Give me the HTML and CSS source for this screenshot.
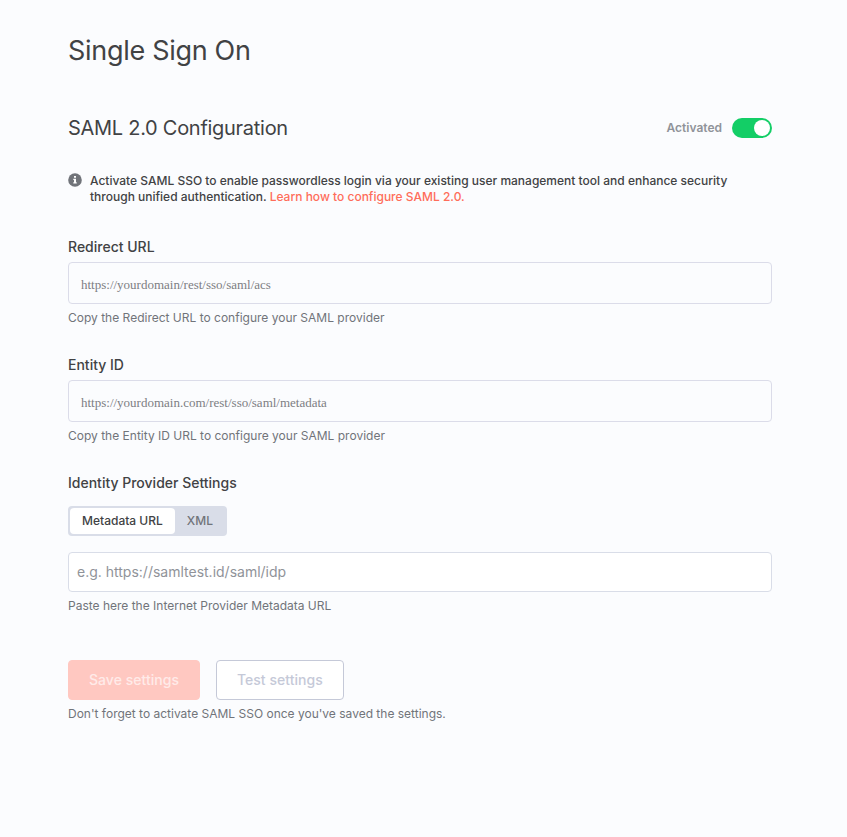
FILE: index.html
```html
<!DOCTYPE html>
<html lang="en">
<head>
  <meta charset="UTF-8">
  <title>Single Sign On</title>
  <link rel="stylesheet" href="styles.css">
</head>
<body>

<main class="container">
  <h1>Single Sign On</h1>

  <div class="top">
    <h2>SAML 2.0 Configuration</h2>
    <label class="switch">
      <span class="switch-label">Activated</span>
      <input type="checkbox" checked>
      <span class="switch-core"></span>
    </label>
  </div>

  <div class="info">
    <svg class="info-icon" viewBox="0 0 14 14" width="14" height="14">
      <circle cx="7" cy="7" r="6.8" fill="#71747a"/>
      <path d="M6 3h2v1.8H6zM5.3 5.8H8v3.5h.7v1.3H5.3V9.3H6V7.1h-.7z" fill="#fff"/>
    </svg>
    <p>Activate SAML SSO to enable passwordless login via your existing user management tool and enhance security through unified authentication. <a href="#">Learn how to configure SAML 2.0.</a></p>
  </div>

  <div class="group">
    <label>Redirect URL</label>
    <div class="copy-input">https://yourdomain/rest/sso/saml/acs</div>
    <small>Copy the Redirect URL to configure your SAML provider</small>
  </div>

  <div class="group">
    <label>Entity ID</label>
    <div class="copy-input">https://yourdomain.com/rest/sso/saml/metadata</div>
    <small>Copy the Entity ID URL to configure your SAML provider</small>
  </div>

  <div class="group idp">
    <label for="metadataUrl">Identity Provider Settings</label>
    <div class="tabs">
      <button type="button" class="tab active">Metadata URL</button>
      <button type="button" class="tab">XML</button>
    </div>
    <input type="text" id="metadataUrl" class="text-input" placeholder="e.g. https://samltest.id/saml/idp">
    <small>Paste here the Internet Provider Metadata URL</small>
  </div>

  <div class="buttons">
    <button type="button" class="btn primary" disabled>Save settings</button>
    <button type="button" class="btn secondary" disabled>Test settings</button>
  </div>
  <small>Don't forget to activate SAML SSO once you've saved the settings.</small>
</main>

</body>
</html>
```
FILE: styles.css
```css
* {
  box-sizing: border-box;
}
body {
  margin: 0;
  background: #fbfcfe;
  color: #414244;
  font-family: Inter, sans-serif;
  font-size: 14px;
}
button, input {
  font-family: inherit;
}
.container {
  width: 704px;
  margin: 0 auto 0 68px;
  padding-top: 33px;
}
h1, h2, p {
  margin: 0;
  font-weight: 400;
}
h1 {
  font-size: 27px;
  line-height: 36px;
  letter-spacing: -0.3px;
}
.top {
  display: flex;
  justify-content: space-between;
  align-items: center;
  margin-top: 46px;
}
h2 {
  font-size: 20px;
  line-height: 26px;
  letter-spacing: -0.28px;
}
.switch {
  display: flex;
  align-items: center;
  gap: 10px;
}
.switch input {
  display: none;
}
.switch-label {
  padding-bottom: 2px;
  color: #909399;
  font-size: 12px;
  font-weight: 600;
}
.switch-core {
  display: flex;
  justify-content: flex-end;
  width: 40px;
  height: 20px;
  padding: 2px;
  border-radius: 10px;
  background: #13ce66;
}
.switch-core::after {
  content: "";
  width: 16px;
  height: 16px;
  border-radius: 50%;
  background: #fff;
}
.info {
  display: flex;
  align-items: flex-start;
  gap: 8px;
  margin-top: 32px;
  font-size: 12px;
  line-height: 16px;
}
.info p {
  width: 660px;
  font-weight: 500;
}
.info-icon {
  flex: none;
}
.info a {
  color: #ff6d5a;
  text-decoration: none;
}
.group {
  margin-top: 29px;
}
.info + .group {
  margin-top: 32px;
}
.group label {
  display: block;
  margin-bottom: 6px;
  font-weight: 500;
  line-height: 19px;
}
small {
  display: block;
  margin-top: 6px;
  color: #71747a;
  font-size: 12px;
  line-height: 16px;
}
.copy-input {
  height: 42px;
  padding: 3px 12px 0;
  border: 1px solid #dbdce9;
  border-radius: 4px;
  color: #7d7e83;
  font-family: "Liberation Serif", serif;
  font-size: 13px;
  line-height: 38px;
}
.idp label {
  margin-bottom: 14px;
}
.tabs {
  display: inline-flex;
  height: 30px;
  padding: 2px;
  border-radius: 4px;
  background: #d9dde8;
}
.tab {
  padding: 0 12px 2px;
  border: none;
  border-radius: 4px;
  background: none;
  color: #71747a;
  font-size: 12px;
  font-weight: 500;
}
.tab.active {
  background: #fff;
  color: #414244;
}
.text-input {
  display: block;
  width: 100%;
  height: 40px;
  margin-top: 16px;
  padding: 0 8px 2px;
  border: 1px solid #d9dde8;
  border-radius: 4px;
  background: #fff;
  font-size: 14px;
}
.text-input::placeholder {
  color: #909399;
}
.buttons {
  display: flex;
  gap: 16px;
  margin-top: 46px;
}
.btn {
  height: 40px;
  padding: 0 20px 2px;
  border: 1px solid;
  border-radius: 4px;
  font-size: 14px;
  font-weight: 550;
  letter-spacing: 0.03px;
}
.primary {
  background: #ffc8c1;
  border-color: #ffc8c1;
  color: #ffebe9;
}
.secondary {
  background: #fff;
  border-color: #c5c9d8;
  color: #c5c9d8;
}
```
